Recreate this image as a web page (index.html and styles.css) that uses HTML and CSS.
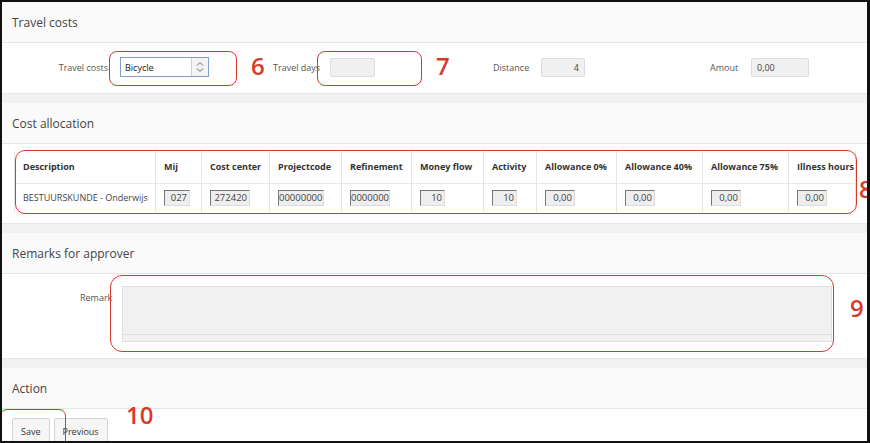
FILE: index.html
```html
<!doctype html>
<html>
<head>
	<meta charset=utf-8>
	<link rel="stylesheet" href="styles.css">
</head>
<body>

<div class=frame>

	<div class=panel>
		<div class=head>Travel costs</div>
		<div class="body fields">
			<label class=lbl-travel>Travel costs</label>
			<div class=select>
				<span>Bicycle</span>
				<span class=spin>
					<svg width=8 height=12 viewBox="0 0 8 12"><path d="M1 4.5 L4 1.5 L7 4.5 M1 7.5 L4 10.5 L7 7.5" fill=none stroke="#666" stroke-width=1></path></svg>
				</span>
			</div>
			<label class=lbl-days>Travel days</label>
			<div class="box days"></div>
			<label class=lbl-dist>Distance</label>
			<div class="box dist right">4</div>
			<label class=lbl-amount>Amout</label>
			<div class="box amount">0,00</div>
		</div>
	</div>

	<div class=gap></div>

	<div class=panel>
		<div class=head>Cost allocation</div>
		<div class="body alloc">
			<table class=grid>
				<colgroup>
					<col style="width:141px"><col style="width:46px"><col style="width:68px"><col style="width:72px">
					<col style="width:70px"><col style="width:72px"><col style="width:53px"><col style="width:80px">
					<col style="width:86px"><col style="width:86px"><col style="width:67px">
				</colgroup>
				<tr>
					<th>Description</th><th>Mij</th><th>Cost center</th><th>Projectcode</th><th>Refinement</th>
					<th>Money flow</th><th>Activity</th><th>Allowance 0%</th><th>Allowance 40%</th><th>Allowance 75%</th><th>Illness hours</th>
				</tr>
				<tr>
					<td>BESTUURSKUNDE - Onderwijs</td>
					<td><span class=cell style="width:26px">027</span></td>
					<td><span class=cell style="width:40px">272420</span></td>
					<td><span class=cell style="width:46px">00000000</span></td>
					<td><span class=cell style="width:40px">0000000</span></td>
					<td><span class=cell style="width:25px">10</span></td>
					<td><span class=cell style="width:25px">10</span></td>
					<td><span class=cell style="width:30px">0,00</span></td>
					<td><span class=cell style="width:30px">0,00</span></td>
					<td><span class=cell style="width:30px">0,00</span></td>
					<td><span class=cell style="width:30px">0,00</span></td>
				</tr>
			</table>
		</div>
	</div>

	<div class=gap></div>

	<div class=panel>
		<div class=head>Remarks for approver</div>
		<div class="body remarks">
			<label class=lbl-remark>Remark</label>
			<div class=textarea><div class=textarea-foot></div></div>
		</div>
	</div>

	<div class=gap></div>

	<div class=panel>
		<div class=head>Action</div>
		<div class="body actions">
			<button class=btn>Save</button>
			<button class=btn>Previous</button>
		</div>
	</div>

	<div class=mark style="left:107px; top:49px; width:128px; height:35px; border-radius:8px;"></div>
	<div class=num style="left:249px; top:49px;">6</div>
	<div class=mark style="left:315px; top:49px; width:105px; height:35px; border-radius:8px;"></div>
	<div class=num style="left:434px; top:49px;">7</div>
	<div class=mark style="left:13px; top:148px; width:842px; height:64px; border-radius:10px;"></div>
	<div class=num style="left:857px; top:172px;">8</div>
	<div class=mark style="left:108px; top:273px; width:724px; height:77px; border-radius:12px;"></div>
	<div class=num style="left:848px; top:291px;">9</div>
	<div class=mark style="left:-2px; top:407px; width:66px; height:42px; border-radius:7px;"></div>
	<div class=num style="left:124px; top:398px;">10</div>

</div>

</body>
</html>
```

FILE: styles.css
```css
html, body { margin: 0; padding: 0; height: 100%; overflow: hidden; }
body { font-family: "Open Sans", "Noto Sans", sans-serif; color: #555; background: #fff; }

.frame { position: relative; box-sizing: border-box; width: 870px; height: 443px; border: 2px solid #111; border-right-width: 3px; overflow: hidden; background: #f2f2f2; }

.panel { background: #fff; }
.head { height: 40px; line-height: 42px; padding-left: 10px; font-size: 12px; color: #444; background: #fafafa; border-bottom: 1px solid #e6e6e6; overflow: hidden; }
.gap { height: 9px; background: #f1f1f1; border-top: 1px solid #e8e8e8; }

.fields { height: 50px; box-sizing: border-box; padding-bottom: 2px; display: flex; align-items: center; font-size: 9px; }
.fields label { color: #555; }
.lbl-travel { width: 106px; text-align: right; }
.select { margin-left: 12px; width: 89px; height: 20px; box-sizing: border-box; border: 1px solid #7f9fd0; display: flex; align-items: center; justify-content: space-between; padding-left: 4px; color: #222; font-size: 9px; }
.spin { width: 16px; height: 18px; border-left: 1px solid #ccd; display: flex; align-items: center; justify-content: center; background: #f4f4f4; }
.lbl-days { margin-left: 64px; width: 57px; white-space: nowrap; }
.box { height: 19px; box-sizing: border-box; background: #f0f0f0; border: 1px solid #dcdcdc; border-radius: 2px; line-height: 17px; padding: 0 5px; color: #444; font-size: 9px; }
.right { text-align: right; }
.days { width: 45px; }
.lbl-dist { margin-left: 118px; width: 34px; }
.dist { margin-left: 14px; width: 44px; }
.lbl-amount { margin-left: 125px; width: 29px; }
.amount { margin-left: 12px; width: 58px; }

.alloc { height: 79px; padding: 7px 0 0 12px; box-sizing: border-box; }
.grid { border-collapse: collapse; table-layout: fixed; width: 841px; font-size: 9px; }
.grid th, .grid td { border-left: 1px solid #e6e6e6; border-right: 1px solid #e6e6e6; text-align: left; white-space: nowrap; overflow: hidden; padding: 0 0 0 8px; line-height: 12px; }
.grid th { height: 32px; font-weight: bold; color: #333; border-bottom: 1px solid #e6e6e6; }
.grid td { height: 28px; color: #444; }
.cell { display: inline-block; box-sizing: border-box; height: 16px; line-height: 14px; text-align: right; padding-right: 2px; background: #eee; border: 1px solid #ddd; border-top-color: #777; border-left-color: #777; font-size: 9.5px; vertical-align: middle; }

.remarks { height: 84px; position: relative; }
.lbl-remark { position: absolute; left: 78px; top: 17px; font-size: 9px; }
.textarea { position: absolute; left: 120px; top: 12px; width: 710px; height: 56px; box-sizing: border-box; background: #f1f1f1; border: 1px solid #e0e0e0; }
.textarea-foot { position: absolute; left: 0; right: 0; bottom: 6px; border-top: 1px solid #ddd; }

.actions { height: 40px; padding: 9px 0 0 10px; box-sizing: border-box; display: flex; align-items: flex-start; gap: 4px; }
.btn { font-family: inherit; font-size: 9px; color: #333; background: #f6f6f6; border: 1px solid #d4d4d4; border-radius: 2px; height: 27px; padding: 0 8px; }

.mark { position: absolute; box-sizing: border-box; border: 1.5px solid #d8392b; }
.num { position: absolute; font-size: 24px; font-weight: 600; color: #d8392b; line-height: 30px; font-family: "Open Sans", sans-serif; }
```
